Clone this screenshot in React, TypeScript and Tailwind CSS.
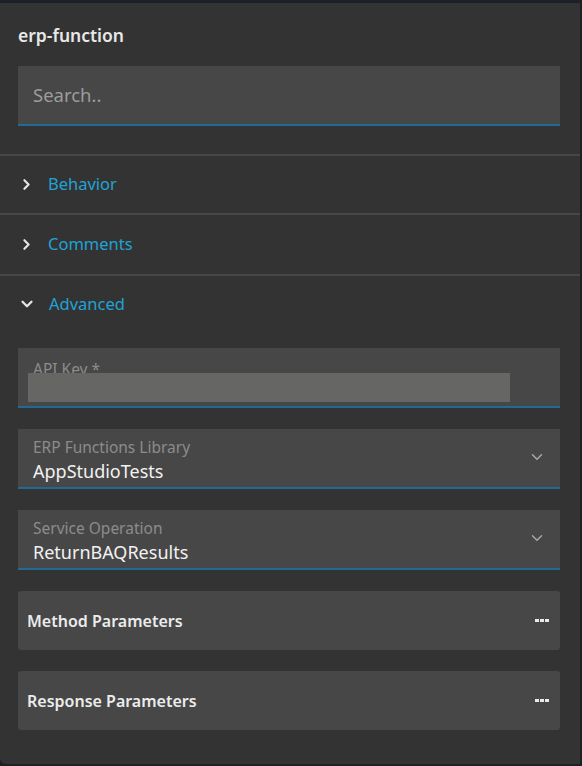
import React from 'react';
import { ChevronRight, ChevronDown } from 'lucide-react';

const font = { fontFamily: '"Noto Sans", "Open Sans", sans-serif' };

const Section: React.FC<{ title: string; open?: boolean; h: string }> = ({ title, open, h }) => (
  <div className={`flex items-center px-[18px] gap-[13px] ${h}`}>
    {open ? (
      <ChevronDown size={18} strokeWidth={3} className="text-[#e6e6e6]" />
    ) : (
      <ChevronRight size={17} strokeWidth={3} className="text-[#e6e6e6]" />
    )}
    <span className="text-[16.5px] text-[#1fa3d6]">{title}</span>
  </div>
);

const SelectField: React.FC<{ label: string; value: string }> = ({ label, value }) => (
  <div className="h-[60px] bg-[#474747] border-b-2 border-[#1f6b93] flex items-start pl-[15px] pr-[14px] pt-[9px]">
    <div className="flex-1 flex flex-col">
      <span className="text-[15.5px] leading-[19px] text-[#8c8c8c]">{label}</span>
      <span className="text-[18px] leading-[23px] mt-[3px] text-[#f2f2f2]">{value}</span>
    </div>
    <ChevronDown size={18} strokeWidth={2} className="text-[#a8a8a8] mt-[10px]" />
  </div>
);

const Dots = () => (
  <div className="flex gap-[1px]">
    <span className="w-[4px] h-[3px] bg-[#e8e8f0]" />
    <span className="w-[4px] h-[3px] bg-[#e8e8f0]" />
    <span className="w-[4px] h-[3px] bg-[#e8e8f0]" />
  </div>
);

const ParamCard: React.FC<{ title: string }> = ({ title }) => (
  <div className="h-[59px] bg-[#474747] rounded-[3px] flex items-center justify-between pl-[9px] pr-[11px]">
    <span className="text-[16px] font-semibold text-[#ececec]">{title}</span>
    <Dots />
  </div>
);

export default function App() {
  return (
    <div className="w-[582px] h-[766px] bg-[#1c2127] pt-[3px] pr-[2px] pb-[2px]" style={font}>
      <div className="h-full bg-[#333333] rounded-bl-[6px] flex flex-col">
        <div className="pl-[18px] pr-[20px] pt-[20px] pb-[28px]">
          <div className="text-[17.5px] leading-[24px] font-semibold text-[#e8e8e8] mb-[19px]">erp-function</div>
          <div className="h-[60px] bg-[#474747] border-b-2 border-[#1f6b93] flex items-center px-[15px]">
            <span className="text-[18.5px] text-[#9c9c9c]">Search..</span>
          </div>
        </div>
        <div className="border-t-2 border-[#474747]">
          <Section title="Behavior" h="h-[57px]" />
        </div>
        <div className="border-t-2 border-[#474747]">
          <Section title="Comments" h="h-[59px]" />
        </div>
        <div className="border-t-2 border-[#474747]">
          <Section title="Advanced" open h="h-[56px]" />
        </div>
        <div className="flex flex-col gap-[21px] pl-[18px] pr-[20px] pt-[16px]">
          <div className="relative h-[60px] bg-[#474747] border-b-2 border-[#1f6b93] px-[15px] pt-[9px]">
            <span className="text-[15.5px] leading-[19px] text-[#8c8c8c]">API Key *</span>
            <div className="absolute left-[10px] top-[25px] w-[482px] h-[29px] bg-[#666665]" />
          </div>
          <SelectField label="ERP Functions Library" value="AppStudioTests" />
          <SelectField label="Service Operation" value="ReturnBAQResults" />
          <ParamCard title="Method Parameters" />
          <ParamCard title="Response Parameters" />
        </div>
      </div>
    </div>
  );
}
